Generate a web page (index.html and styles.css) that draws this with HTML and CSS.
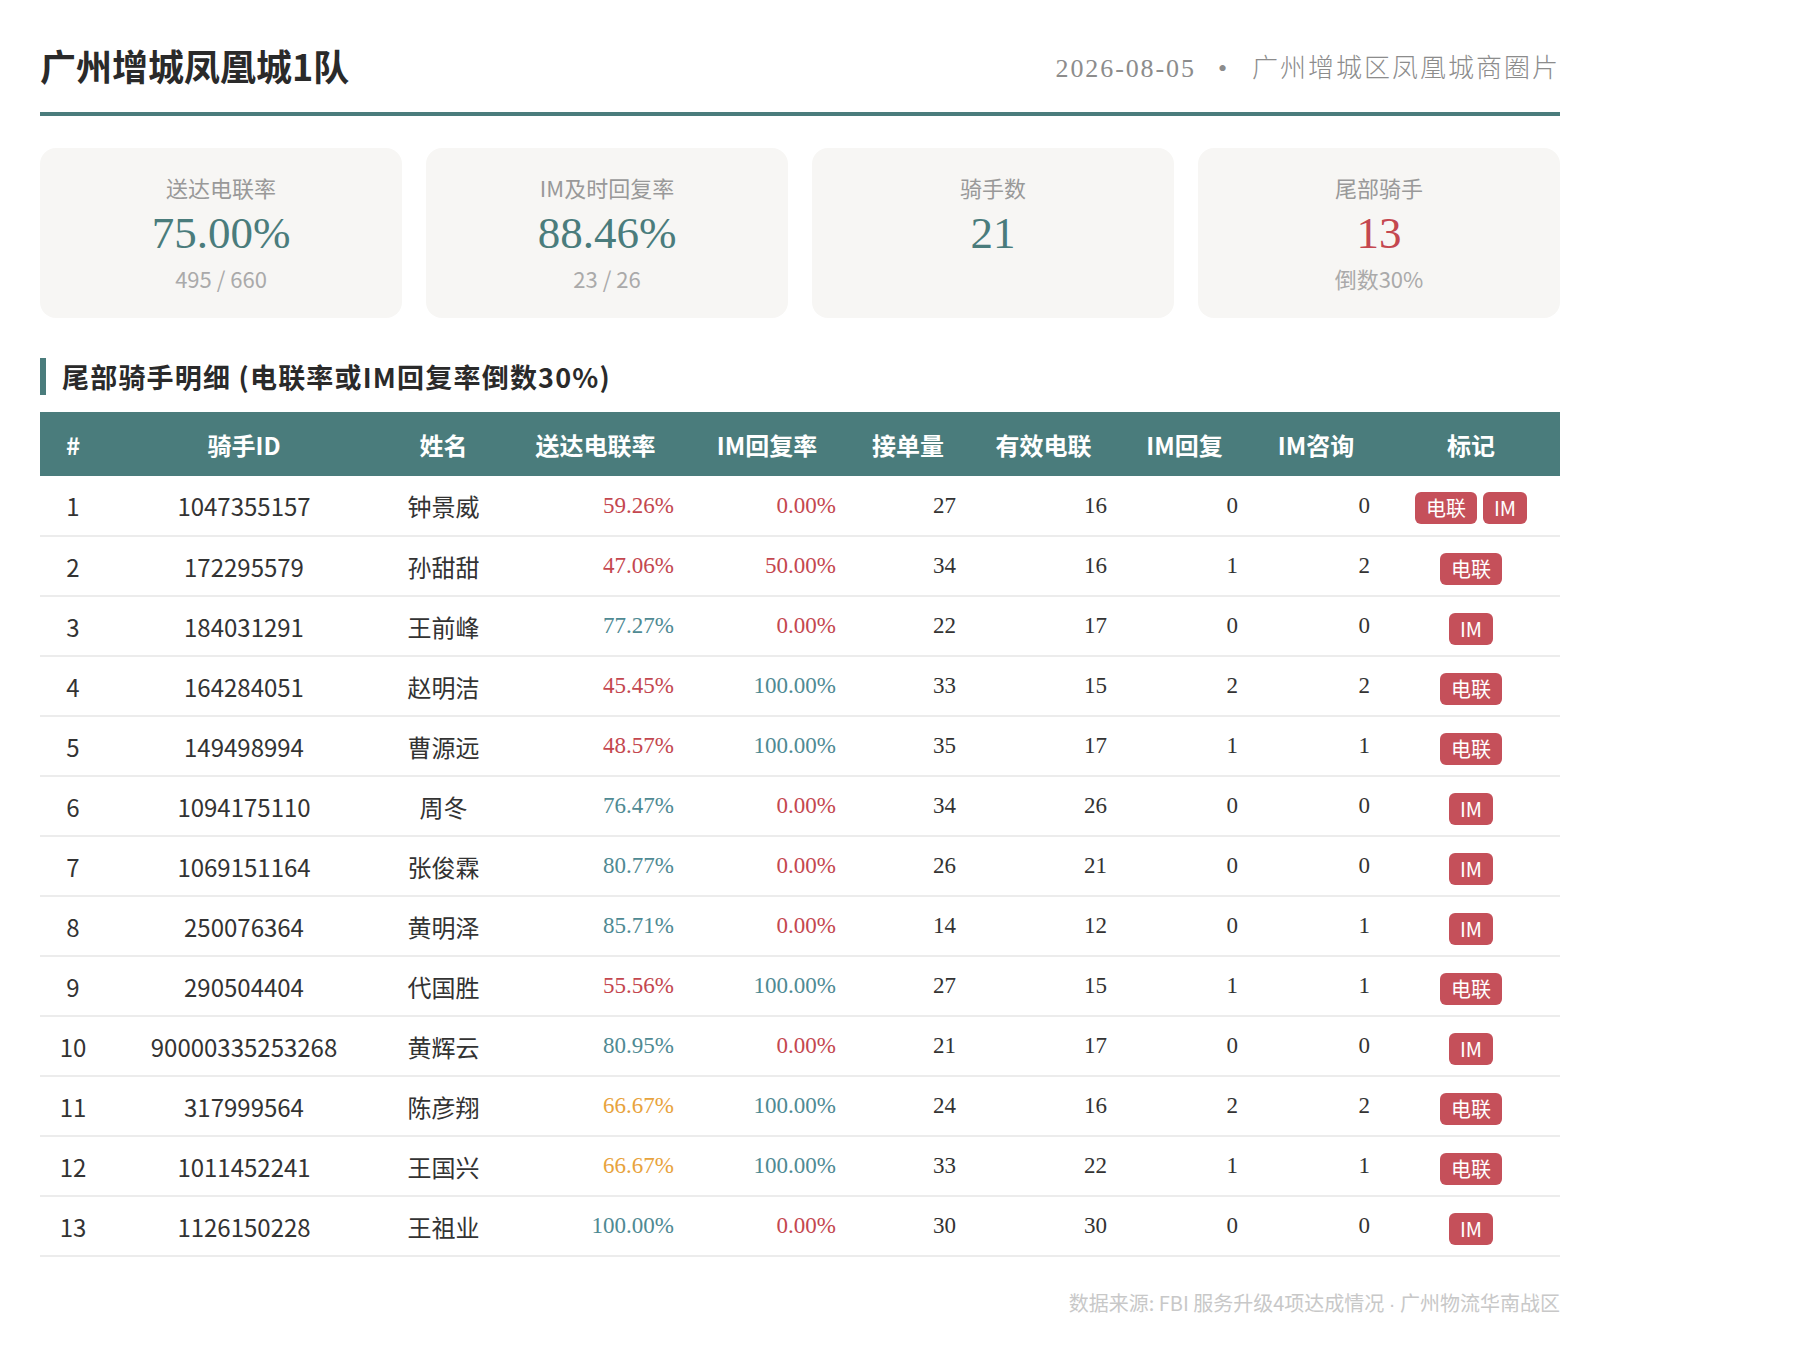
FILE: index.html
```html
<!DOCTYPE html>
<html lang="zh-CN">
<head>
<meta charset="utf-8">
<title>广州增城凤凰城1队</title>
<link rel="stylesheet" href="styles.css">
</head>
<body>
<div class="page">
  <header class="top">
    <h1 class="title">广州增城凤凰城1队</h1>
    <div class="meta"><span class="meta-date">2026-08-05</span><span class="meta-dot">•</span><span>广州增城区凤凰城商圈片</span></div>
  </header>

  <section class="stats">
    <div class="card">
      <div class="card-label">送达电联率</div>
      <div class="card-value">75.00%</div>
      <div class="card-sub">495 / 660</div>
    </div>
    <div class="card">
      <div class="card-label">IM及时回复率</div>
      <div class="card-value">88.46%</div>
      <div class="card-sub">23 / 26</div>
    </div>
    <div class="card">
      <div class="card-label">骑手数</div>
      <div class="card-value">21</div>
    </div>
    <div class="card">
      <div class="card-label">尾部骑手</div>
      <div class="card-value alert">13</div>
      <div class="card-sub">倒数30%</div>
    </div>
  </section>

  <h2 class="section-title">尾部骑手明细 (电联率或IM回复率倒数30%)</h2>

  <table class="grid">
    <colgroup>
      <col class="w-idx"><col class="w-id"><col class="w-name"><col class="w-rate"><col class="w-im">
      <col class="w-orders"><col class="w-calls"><col class="w-imr"><col class="w-imq"><col class="w-tag">
    </colgroup>
    <thead>
      <tr>
        <th>#</th><th>骑手ID</th><th>姓名</th><th>送达电联率</th><th>IM回复率</th>
        <th>接单量</th><th>有效电联</th><th>IM回复</th><th>IM咨询</th><th>标记</th>
      </tr>
    </thead>
    <tbody>
      <tr><td class="ctr">1</td><td class="ctr">1047355157</td><td class="ctr">钟景威</td><td class="num bad">59.26%</td><td class="num bad">0.00%</td><td class="num">27</td><td class="num">16</td><td class="num">0</td><td class="num">0</td><td class="ctr"><span class="tag">电联</span><span class="tag">IM</span></td></tr>
      <tr><td class="ctr">2</td><td class="ctr">172295579</td><td class="ctr">孙甜甜</td><td class="num bad">47.06%</td><td class="num bad">50.00%</td><td class="num">34</td><td class="num">16</td><td class="num">1</td><td class="num">2</td><td class="ctr"><span class="tag">电联</span></td></tr>
      <tr><td class="ctr">3</td><td class="ctr">184031291</td><td class="ctr">王前峰</td><td class="num good">77.27%</td><td class="num bad">0.00%</td><td class="num">22</td><td class="num">17</td><td class="num">0</td><td class="num">0</td><td class="ctr"><span class="tag">IM</span></td></tr>
      <tr><td class="ctr">4</td><td class="ctr">164284051</td><td class="ctr">赵明洁</td><td class="num bad">45.45%</td><td class="num good">100.00%</td><td class="num">33</td><td class="num">15</td><td class="num">2</td><td class="num">2</td><td class="ctr"><span class="tag">电联</span></td></tr>
      <tr><td class="ctr">5</td><td class="ctr">149498994</td><td class="ctr">曹源远</td><td class="num bad">48.57%</td><td class="num good">100.00%</td><td class="num">35</td><td class="num">17</td><td class="num">1</td><td class="num">1</td><td class="ctr"><span class="tag">电联</span></td></tr>
      <tr><td class="ctr">6</td><td class="ctr">1094175110</td><td class="ctr">周冬</td><td class="num good">76.47%</td><td class="num bad">0.00%</td><td class="num">34</td><td class="num">26</td><td class="num">0</td><td class="num">0</td><td class="ctr"><span class="tag">IM</span></td></tr>
      <tr><td class="ctr">7</td><td class="ctr">1069151164</td><td class="ctr">张俊霖</td><td class="num good">80.77%</td><td class="num bad">0.00%</td><td class="num">26</td><td class="num">21</td><td class="num">0</td><td class="num">0</td><td class="ctr"><span class="tag">IM</span></td></tr>
      <tr><td class="ctr">8</td><td class="ctr">250076364</td><td class="ctr">黄明泽</td><td class="num good">85.71%</td><td class="num bad">0.00%</td><td class="num">14</td><td class="num">12</td><td class="num">0</td><td class="num">1</td><td class="ctr"><span class="tag">IM</span></td></tr>
      <tr><td class="ctr">9</td><td class="ctr">290504404</td><td class="ctr">代国胜</td><td class="num bad">55.56%</td><td class="num good">100.00%</td><td class="num">27</td><td class="num">15</td><td class="num">1</td><td class="num">1</td><td class="ctr"><span class="tag">电联</span></td></tr>
      <tr><td class="ctr">10</td><td class="ctr">90000335253268</td><td class="ctr">黄辉云</td><td class="num good">80.95%</td><td class="num bad">0.00%</td><td class="num">21</td><td class="num">17</td><td class="num">0</td><td class="num">0</td><td class="ctr"><span class="tag">IM</span></td></tr>
      <tr><td class="ctr">11</td><td class="ctr">317999564</td><td class="ctr">陈彦翔</td><td class="num warn">66.67%</td><td class="num good">100.00%</td><td class="num">24</td><td class="num">16</td><td class="num">2</td><td class="num">2</td><td class="ctr"><span class="tag">电联</span></td></tr>
      <tr><td class="ctr">12</td><td class="ctr">1011452241</td><td class="ctr">王国兴</td><td class="num warn">66.67%</td><td class="num good">100.00%</td><td class="num">33</td><td class="num">22</td><td class="num">1</td><td class="num">1</td><td class="ctr"><span class="tag">电联</span></td></tr>
      <tr><td class="ctr">13</td><td class="ctr">1126150228</td><td class="ctr">王祖业</td><td class="num good">100.00%</td><td class="num bad">0.00%</td><td class="num">30</td><td class="num">30</td><td class="num">0</td><td class="num">0</td><td class="ctr"><span class="tag">IM</span></td></tr>
    </tbody>
  </table>

  <footer class="foot">数据来源: FBI 服务升级4项达成情况 <span class="dot">·</span> 广州物流华南战区</footer>
</div>
</body>
</html>
```

FILE: styles.css
```css
* { box-sizing: border-box; }

html, body {
  margin: 0;
  padding: 0;
  background: #ffffff;
}

body {
  font-family: "Noto Sans CJK SC", "Noto Sans", sans-serif;
  color: #333333;
}

.page {
  width: 1560px;
  padding: 40px 0 40px 40px;
}

.top {
  display: flex;
  align-items: center;
  justify-content: space-between;
  padding-bottom: 22px;
  border-bottom: 4px solid #4a7c7c;
}

.title {
  margin: 0;
  font-size: 36px;
  line-height: 50px;
  font-weight: 700;
  color: #2a2a2a;
}

.meta {
  font-family: "Liberation Serif", "Noto Sans CJK SC", serif;
  font-size: 26px;
  font-weight: 300;
  letter-spacing: 2px;
  color: #8c8c8c;
}

.meta-date { letter-spacing: 1.9px; }

.meta-dot {
  margin: 0 23px 0 22px;
}

.stats {
  display: grid;
  grid-template-columns: repeat(4, 1fr);
  gap: 24px;
  margin-top: 32px;
}

.card {
  background: #f7f6f4;
  border-radius: 16px;
  height: 170px;
  padding-top: 23px;
  text-align: center;
}

.card-label {
  font-size: 22px;
  line-height: 32px;
  color: #999999;
}

.card-value {
  margin-top: 2px;
  font-family: "Liberation Serif", serif;
  font-size: 45px;
  line-height: 57px;
  color: #4a7c7c;
}

.card-value.alert { color: #c4474f; }

.card-sub {
  font-size: 22px;
  line-height: 32px;
  color: #aaaaaa;
}

.section-title {
  margin: 40px 0 17px;
  border-left: 6px solid #4a7c7c;
  padding-left: 16px;
  font-size: 27px;
  line-height: 37px;
  font-weight: 700;
  letter-spacing: 1.2px;
  color: #2a2a2a;
}

.grid {
  width: 1520px;
  border-collapse: collapse;
  table-layout: fixed;
}

.w-idx { width: 66px; }
.w-id { width: 276px; }
.w-name { width: 123px; }
.w-rate { width: 181px; }
.w-im { width: 162px; }
.w-orders { width: 120px; }
.w-calls { width: 151px; }
.w-imr { width: 131px; }
.w-imq { width: 132px; }
.w-tag { width: 178px; }

.grid th {
  background: #4a7c7c;
  color: #ffffff;
  height: 64px;
  font-size: 24px;
  font-weight: 700;
  text-align: center;
  padding: 0;
}

.grid td {
  height: 60px;
  border-bottom: 2px solid #ececec;
  font-size: 24px;
  padding: 0 12px;
  white-space: nowrap;
}

.grid td.ctr { text-align: center; padding: 0; }

.grid td.num {
  text-align: right;
  font-family: "Liberation Serif", serif;
  font-size: 23px;
  color: #333333;
}

.grid td.bad { color: #c4474f; }
.grid td.good { color: #4f8a93; }
.grid td.warn { color: #e8a33d; }

.tag {
  display: inline-block;
  height: 32px;
  line-height: 32px;
  padding: 0 11px;
  margin: 0 3px;
  border-radius: 6px;
  background: #c5505a;
  color: #ffffff;
  font-size: 20px;
  vertical-align: middle;
}

.foot {
  margin-top: 31px;
  text-align: right;
  font-size: 20px;
  line-height: 30px;
  color: #c8c8c8;
}

.dot {
  font-family: "Liberation Sans", sans-serif;
}
```
